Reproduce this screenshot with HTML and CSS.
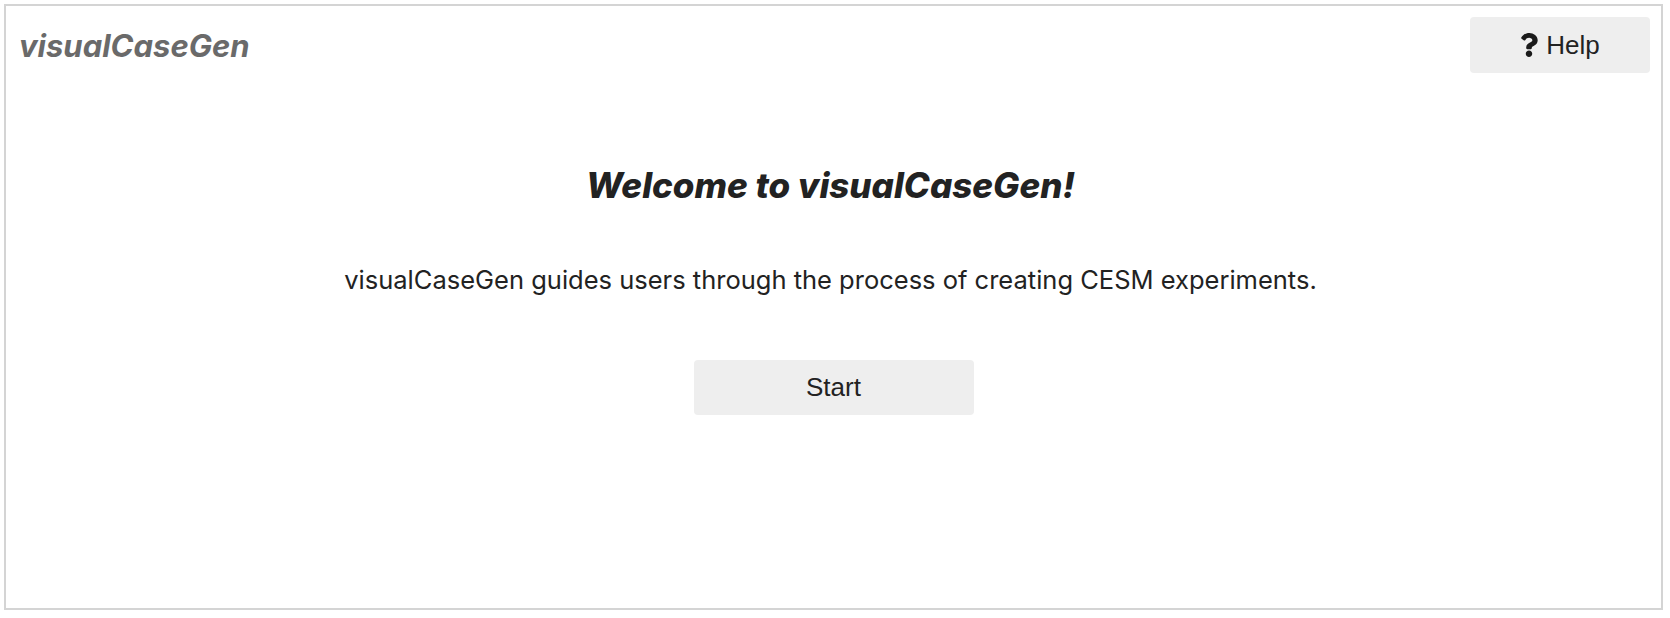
FILE: index.html
```html
<!DOCTYPE html>
<html>
<head>
<meta charset="utf-8">
<link rel="stylesheet" href="styles.css">
</head>
<body>
<div class="app">
  <header class="topbar">
    <div class="brand">visualCaseGen</div>
    <button class="btn help-btn">
      <svg class="q-icon" viewBox="0 0 384 512" aria-hidden="true"><path d="M202.021 0C122.202 0 70.503 32.703 29.914 91.026c-7.363 10.58-5.093 25.086 5.178 32.874l43.138 32.709c10.373 7.865 25.132 6.026 33.253-4.148 25.049-31.381 43.63-49.449 82.757-49.449 30.764 0 68.816 19.799 68.816 49.631 0 22.552-18.617 34.134-48.993 51.164-35.423 19.860-82.299 44.576-82.299 106.405V320c0 13.255 10.745 24 24 24h72.471c13.255 0 24-10.745 24-24v-5.773c0-42.86 125.268-44.645 125.268-160.627C377.504 66.256 286.902 0 202.021 0zM192 373.459c-38.196 0-69.271 31.075-69.271 69.271 0 38.195 31.075 69.270 69.271 69.270s69.271-31.075 69.271-69.271-31.075-69.270-69.271-69.270z"/></svg>
      <span>Help</span>
    </button>
  </header>
  <main class="welcome">
    <h1 class="welcome-title">Welcome to visualCaseGen!</h1>
    <p class="welcome-text">visualCaseGen guides users through the process of creating CESM experiments.</p>
    <button class="btn start-btn">Start</button>
  </main>
</div>
</body>
</html>
```
FILE: styles.css
```css
html, body {
  margin: 0;
  padding: 0;
  background: #ffffff;
}

.app {
  box-sizing: border-box;
  margin: 4px 7px 0 4px;
  height: 606px;
  border: 2px solid #d4d4d4;
  font-family: Inter, "Noto Sans", sans-serif;
  color: #222222;
}

.topbar {
  display: flex;
  justify-content: space-between;
  align-items: center;
  padding: 11px 11px 0 13px;
}

.brand {
  font-size: 31px;
  font-weight: 700;
  font-style: italic;
  color: #6a6a6a;
}

.btn {
  border: none;
  border-radius: 4px;
  background: #eeeeee;
  color: #222222;
  font-family: "Liberation Sans", Arial, sans-serif;
  font-size: 26px;
  display: inline-flex;
  align-items: center;
  justify-content: center;
  padding: 0;
  cursor: pointer;
}

.help-btn {
  width: 180px;
  height: 56px;
  gap: 8px;
}

.q-icon {
  width: 18px;
  height: 24px;
  fill: #1a1a1a;
}

.welcome {
  display: flex;
  flex-direction: column;
  align-items: center;
}

.welcome-title {
  margin: 92px 0 0 0;
  padding-right: 6px;
  font-size: 35px;
  line-height: 40px;
  font-weight: 800;
  font-style: italic;
  color: #222222;
}

.welcome-text {
  margin: 61px 0 0 0;
  padding-right: 6px;
  font-size: 25.5px;
  line-height: 28px;
  color: #222222;
}

.start-btn {
  margin-top: 66px;
  width: 280px;
  height: 55px;
}
```
